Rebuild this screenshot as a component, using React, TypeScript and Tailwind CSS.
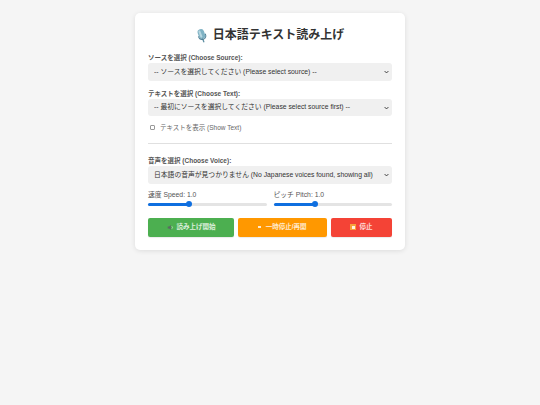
const font = "[font-family:'Liberation_Sans','Noto_Sans_CJK_JP',sans-serif]";

function MicIcon() {
  return (
    <svg viewBox="0 0 12 16" className="h-[15px] w-[12px]">
      <g transform="rotate(-20 6 8)">
        <rect x="2.500" y="1" width="7" height="10.500" rx="3.500" fill="#7fb2c4" />
        <rect x="3.800" y="2" width="2.200" height="8" rx="1.100" fill="#b7d6e0" />
        <path d="M5.500 11.500v3.500" stroke="#5f8fa3" strokeWidth="1.400" strokeLinecap="round" />
        <path d="M2 7.500c0 3 1.500 4.800 4 4.800s4-1.800 4-4.800" fill="none" stroke="#4f7f95" strokeWidth="1" />
      </g>
    </svg>
  );
}

function Field({ label, value }: { label: string; value: string }) {
  return (
    <div className="flex flex-col">
      <label className="mb-[1px] text-[6.500px] leading-[9px] font-bold text-[#555]">{label}</label>
      <div className="relative">
        <select className="block h-[17.500px] w-full appearance-none rounded-[3px] border-0 bg-[#f0f0f0] pl-[6px] text-[6.800px] text-[#333] outline-none">
          <option>{value}</option>
        </select>
        <svg viewBox="0 0 8 6" className="absolute top-[7px] right-[3px] h-[4px] w-[5px]">
          <path d="M1 1.500l3 3 3-3" fill="none" stroke="#333" strokeWidth="1.500" />
        </svg>
      </div>
    </div>
  );
}

function Slider({ label }: { label: string }) {
  return (
    <div className="flex flex-1 flex-col">
      <label className="text-[6.800px] leading-[9px] text-[#555]">{label}</label>
      <div className="relative mt-[4px] h-[3px] rounded-full bg-[#e4e4e4]">
        <div className="h-full w-[34%] rounded-full bg-[#0f6fe0]" />
        <div className="absolute top-[-1.500px] left-[38px] h-[6px] w-[6px] rounded-full bg-[#0f6fe0]" />
      </div>
    </div>
  );
}

function SpeakerIcon() {
  return (
    <svg viewBox="0 0 10 10" className="h-[7px] w-[7px]">
      <path d="M1 3.500h2l2.500-2v7l-2.500-2h-2z" fill="#5b6b62" />
      <path d="M7 3.200a2.500 2.500 0 0 1 0 3.600" fill="none" stroke="#cfe3d2" strokeWidth="1" />
    </svg>
  );
}

export default function App() {
  return (
    <div className={`${font} flex min-h-[405px] justify-center bg-[#f5f5f5] pt-[13px]`}>
      <div className="flex h-[237px] w-[270px] flex-col rounded-[5px] bg-white px-[13px] pt-[14px] shadow-[0_1px_5px_rgba(0,0,0,0.1)]">
        <h1 className="flex items-center justify-center gap-[5px] text-[12px] leading-[17px] font-bold text-[#333]">
          <MicIcon />
          <span>日本語テキスト読み上げ</span>
        </h1>

        <div className="mt-[9px] flex flex-col gap-[8px]">
          <Field label="ソースを選択 (Choose Source):" value="-- ソースを選択してください (Please select source) --" />
          <Field label="テキストを選択 (Choose Text):" value="-- 最初にソースを選択してください (Please select source first) --" />
        </div>

        <label className="mt-[7px] flex items-center gap-[5px] text-[6.500px] leading-[9px] text-[#666]">
          <input type="checkbox" className="m-0 ml-[2px] h-[5px] w-[5px] appearance-none rounded-[1px] border border-[#999] bg-white" />
          <span>テキストを表示 (Show Text)</span>
        </label>

        <hr className="mt-[11px] border-0 border-t border-[#e0e0e0]" />

        <div className="mt-[12px]">
          <Field label="音声を選択 (Choose Voice):" value="日本語の音声が見つかりません (No Japanese voices found, showing all)" />
        </div>

        <div className="mt-[6px] flex gap-[7px]">
          <Slider label="速度 Speed: 1.0" />
          <Slider label="ピッチ Pitch: 1.0" />
        </div>

        <div className="mt-[12px] flex h-[19px] gap-[4px] text-[6.500px] font-bold text-white/80">
          <button className="flex w-[86.500px] items-center justify-center gap-[3px] rounded-[2px] bg-[#4caf50] shadow-[0_1px_1px_rgba(0,0,0,0.08)]">
            <SpeakerIcon />
            <span>読み上げ開始</span>
          </button>
          <button className="flex w-[89px] items-center justify-center gap-[5px] rounded-[2px] bg-[#ff9800] shadow-[0_1px_1px_rgba(0,0,0,0.08)]">
            <span className="h-[2.500px] w-[2.500px] bg-white/80" />
            <span>一時停止/再開</span>
          </button>
          <button className="flex w-[61.500px] items-center justify-center gap-[3px] rounded-[2px] bg-[#f44336] shadow-[0_1px_1px_rgba(0,0,0,0.08)]">
            <span className="flex h-[6px] w-[6px] items-center justify-center bg-[#f7a13a]">
              <span className="h-[3px] w-[3px] bg-[#fff3e0]" />
            </span>
            <span>停止</span>
          </button>
        </div>
      </div>
    </div>
  );
}
